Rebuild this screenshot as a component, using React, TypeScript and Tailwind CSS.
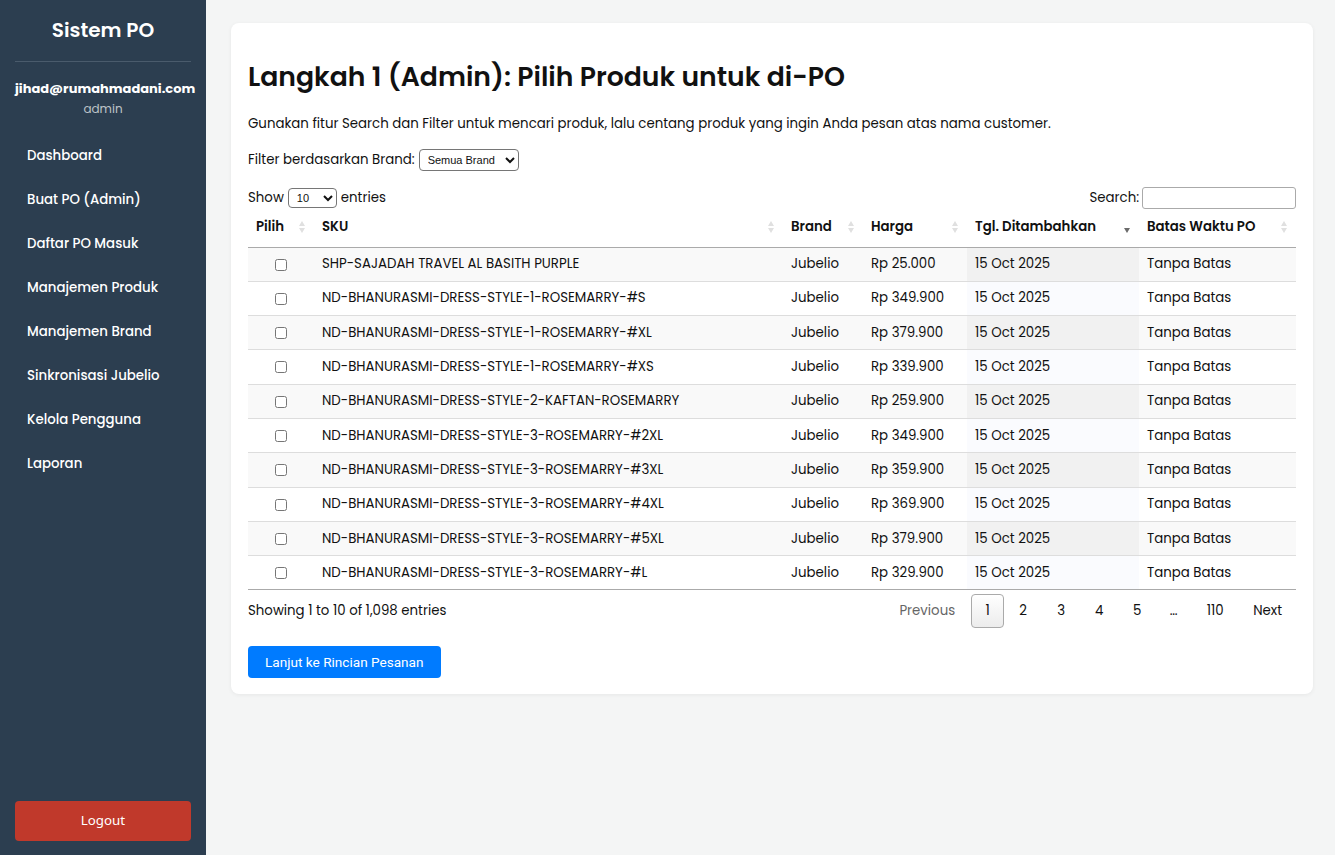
import * as React from "react";

const rows = [
  ["SHP-SAJADAH TRAVEL AL BASITH PURPLE", "Rp 25.000"],
  ["ND-BHANURASMI-DRESS-STYLE-1-ROSEMARRY-#S", "Rp 349.900"],
  ["ND-BHANURASMI-DRESS-STYLE-1-ROSEMARRY-#XL", "Rp 379.900"],
  ["ND-BHANURASMI-DRESS-STYLE-1-ROSEMARRY-#XS", "Rp 339.900"],
  ["ND-BHANURASMI-DRESS-STYLE-2-KAFTAN-ROSEMARRY", "Rp 259.900"],
  ["ND-BHANURASMI-DRESS-STYLE-3-ROSEMARRY-#2XL", "Rp 349.900"],
  ["ND-BHANURASMI-DRESS-STYLE-3-ROSEMARRY-#3XL", "Rp 359.900"],
  ["ND-BHANURASMI-DRESS-STYLE-3-ROSEMARRY-#4XL", "Rp 369.900"],
  ["ND-BHANURASMI-DRESS-STYLE-3-ROSEMARRY-#5XL", "Rp 379.900"],
  ["ND-BHANURASMI-DRESS-STYLE-3-ROSEMARRY-#L", "Rp 329.900"],
];

const menu = [
  "Dashboard",
  "Buat PO (Admin)",
  "Daftar PO Masuk",
  "Manajemen Produk",
  "Manajemen Brand",
  "Sinkronisasi Jubelio",
  "Kelola Pengguna",
  "Laporan",
];

const SortIcon = ({ active }: { active?: boolean }) => (
  <svg width="8" height="14" viewBox="0 0 8 14" className="shrink-0">
    {!active && <path d="M4 1 L7 6 L1 6 Z" fill="#e0e0e0" />}
    <path d="M1 8 L7 8 L4 13 Z" fill={active ? "#6b6b6b" : "#e0e0e0"} />
  </svg>
);

const Th = ({ label, className, active }: { label: string; className: string; active?: boolean }) => (
  <th className={`pt-0 pb-[3px] px-2 text-left font-semibold ${className}`}>
    <div className="flex items-center justify-between">
      <span>{label}</span>
      <SortIcon active={active} />
    </div>
  </th>
);

const App = () => {
  return (
    <div
      className="flex min-h-[855px] bg-[#f4f5f5] text-[#111]"
      style={{ fontFamily: "Poppins, Inter, 'Noto Sans', sans-serif" }}
    >
      <aside className="w-[206px] shrink-0 bg-[#2c3e50] text-white flex flex-col px-[15px]">
        <div className="text-center text-[20px] font-semibold pt-[15px] pb-[16px]">Sistem PO</div>
        <div className="border-t border-[#4a5b6c]" />
        <div className="text-center pt-[17px]">
          <div className="text-[13px] font-bold leading-5">jihad@rumahmadani.com</div>
          <div className="text-[12px] text-[#bdc3c7] leading-5">admin</div>
        </div>
        <nav className="flex flex-col mt-[15px]">
          {menu.map((m) => (
            <div key={m} className="px-3 h-[44px] flex items-center text-[13.33px] font-medium">
              {m}
            </div>
          ))}
        </nav>
        <div className="mt-auto mb-[14px]">
          <button
            className="w-full h-[40px] rounded bg-[#c0392b] text-white text-[13.33px]"
            style={{ fontFamily: "'Noto Sans', sans-serif" }}
          >
            Logout
          </button>
        </div>
      </aside>

      <main className="flex-1 pt-[23px] pl-[25px] pr-[22px]">
        <div className="bg-white rounded-lg shadow-[0_1px_4px_rgba(0,0,0,0.06)] px-[17px] pt-[38px] pb-[16px] text-[13.33px]">
          <h1 className="text-[26.7px] font-semibold leading-8">Langkah 1 (Admin): Pilih Produk untuk di-PO</h1>
          <p className="mt-[21px] leading-5">
            Gunakan fitur Search dan Filter untuk mencari produk, lalu centang produk yang ingin Anda pesan atas nama customer.
          </p>
          <div className="flex items-center mt-[15px]">
            <span>Filter berdasarkan Brand:</span>
            <select
              className="ml-1 h-[22px] w-[100px] border border-[#767676] rounded-sm text-[11px] px-1"
              style={{ fontFamily: "'Liberation Sans', Arial, sans-serif" }}
            >
              <option>Semua Brand</option>
            </select>
          </div>

          <div className="flex items-center justify-between mt-[16px]">
            <div className="flex items-center">
              <span>Show</span>
              <select
                className="mx-1 h-[20px] w-[49px] border border-[#767676] rounded-sm text-[11px] px-1"
                style={{ fontFamily: "'Liberation Sans', Arial, sans-serif" }}
              >
                <option>10</option>
              </select>
              <span>entries</span>
            </div>
            <div className="flex items-center">
              <span>Search:</span>
              <input className="ml-[3px] w-[154px] h-[22px] border border-[#aaa] rounded-[3px]" />
            </div>
          </div>

          <table className="w-full mt-[2px] border-collapse">
            <thead>
              <tr className="h-[36px] border-b border-[#aaa]">
                <Th label="Pilih" className="w-[66px]" />
                <Th label="SKU" className="w-[469px]" />
                <Th label="Brand" className="w-[80px]" />
                <Th label="Harga" className="w-[104px]" />
                <Th label="Tgl. Ditambahkan" className="w-[172px]" active />
                <Th label="Batas Waktu PO" className="" />
              </tr>
            </thead>
            <tbody>
              {rows.map(([sku, price], i) => {
                const odd = i % 2 === 0;
                return (
                  <tr
                    key={sku}
                    className={`h-[34.3px] border-b border-[#ddd] last:border-[#aaa] ${odd ? "bg-[#f9f9f9]" : "bg-white"}`}
                  >
                    <td className="px-2 text-center">
                      <input type="checkbox" className="w-[12px] h-[12px] align-middle" />
                    </td>
                    <td className="px-2">{sku}</td>
                    <td className="px-2">Jubelio</td>
                    <td className="px-2">{price}</td>
                    <td className={`px-2 ${odd ? "bg-[#f1f1f1]" : "bg-[#fafbfe]"}`}>15 Oct 2025</td>
                    <td className="px-2">Tanpa Batas</td>
                  </tr>
                );
              })}
            </tbody>
          </table>

          <div className="flex items-center justify-between mt-[4px]">
            <div>Showing 1 to 10 of 1,098 entries</div>
            <div className="flex items-center">
              <span className="px-4 text-[#666]">Previous</span>
              <span className="w-[33px] h-[34px] flex items-center justify-center border border-[#aaa] rounded-sm bg-gradient-to-b from-white to-[#ececec]">
                1
              </span>
              {["2", "3", "4", "5"].map((n) => (
                <span key={n} className="w-[38px] h-[34px] flex items-center justify-center">
                  {n}
                </span>
              ))}
              <span className="w-[35px] h-[34px] flex items-center justify-center">…</span>
              <span className="w-[48px] h-[34px] flex items-center justify-center">110</span>
              <span className="pl-[14px] pr-[14px]">Next</span>
            </div>
          </div>

          <button
            className="mt-[18px] h-[32px] px-[17px] rounded bg-[#007bff] text-white text-[13.6px]"
            style={{ fontFamily: "Roboto, 'Liberation Sans', sans-serif" }}
          >
            Lanjut ke Rincian Pesanan
          </button>
        </div>
      </main>
    </div>
  );
};

export default App;
